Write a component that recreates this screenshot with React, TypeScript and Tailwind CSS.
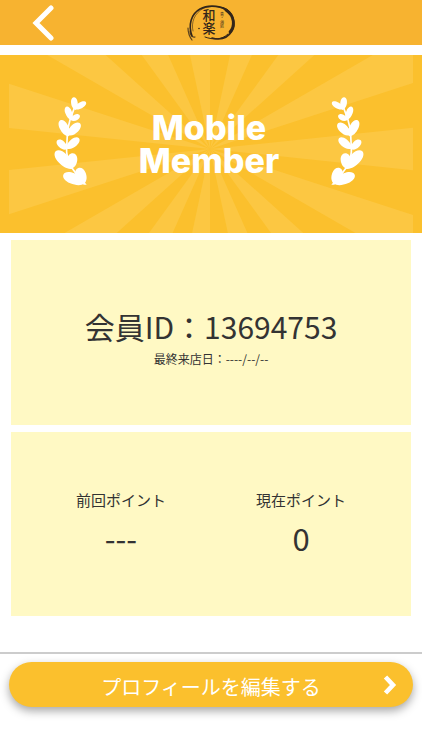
const jp = "font-['Noto_Sans_CJK_JP','Noto_Sans',sans-serif]";

const center = { x: 210, y: 94 };
const rays = Array.from({ length: 15 }, (_, i) => {
  const point = (deg: number) => {
    const a = (deg * Math.PI) / 180;
    return `${(center.x + 400 * Math.cos(a)).toFixed(1)},${(center.y + 400 * Math.sin(a)).toFixed(1)}`;
  };
  return `${center.x},${center.y} ${point(i * 24 - 6)} ${point(i * 24 + 6)}`;
});

// Each leaf: base x, base y, tip x, tip y, half width
const leaves = [
  [106, 60, 101, 22, 10],
  [103, 57, 138, 37, 9],
  [95, 91, 79, 50, 10],
  [92, 90, 119, 76, 9],
  [86, 139, 61, 91, 13],
  [84, 136, 120, 100, 13],
  [81, 178, 52, 151, 11],
  [80, 176, 117, 145, 12],
  [98, 236, 47, 184, 17],
  [94, 236, 99, 190, 15],
  [134, 280, 70, 254, 16],
  [132, 282, 115, 234, 16],
];

function Laurel() {
  return (
    <g fill="#fff">
      <path
        d="M103 54 L90 90 Q83 112 82 135 L80 172 Q77 200 96 234 L112 256"
        fill="none"
        stroke="#fff"
        strokeWidth="5"
      />
      <path d="M122 262 L140 284 L132 284 L118 278Z" />
      {leaves.map(([bx, by, tx, ty, w], i) => {
        const length = Math.hypot(tx - bx, ty - by);
        const angle = (Math.atan2(ty - by, tx - bx) * 180) / Math.PI;
        return (
          <path
            key={i}
            transform={`translate(${bx} ${by}) rotate(${angle})`}
            d={`M0 0 C${length * 0.12} ${-w * 0.8} ${length * 0.35} ${-w} ${length * 0.58} ${-w} C${length * 0.85} ${-w} ${length} ${-w * 0.5} ${length} 0 C${length} ${w * 0.5} ${length * 0.85} ${w} ${length * 0.58} ${w} C${length * 0.35} ${w} ${length * 0.12} ${w * 0.8} 0 0Z`}
          />
        );
      })}
    </g>
  );
}

function Logo() {
  return (
    <svg viewBox="0 0 52 40" className="h-10 w-13" role="img" aria-label="和楽">
      <g fill="none" stroke="#33261a" strokeLinecap="round">
        <path d="M7 33 C3 22 6 11 15 6 C24 1 39 3 44 9" strokeWidth="1.6" />
        <path d="M8 28 C6 20 9 10 19 5 C28 2 37 3 42 9" strokeWidth=".8" opacity=".7" />
        <path d="M38 5 C49 9 51 22 47 28 C42 36 34 37 27 35" strokeWidth="1.6" />
        <path d="M41 7 C50 13 50 23 45 29" strokeWidth="2.8" />
        <path d="M43 31 C37 37 28 37 20 34" strokeWidth="1" />
        <path d="M3 25 C3 30 4 33 7 37 M5 28 C5 31 7 35 10 34" strokeWidth="1.2" opacity=".8" />
      </g>
      <circle cx="14" cy="25.5" r=".8" fill="#33261a" />
      <text
        x="24"
        y="6"
        fontSize="13"
        fill="#33261a"
        className="font-['Noto_Sans_CJK_JP',sans-serif] font-medium [writing-mode:vertical-rl]"
      >
        和楽
      </text>
      <text
        x="37"
        y="9"
        fontSize="4"
        fill="#33261a"
        className="font-['Noto_Sans_CJK_JP',sans-serif] [writing-mode:vertical-rl]"
      >
        青・海処
      </text>
    </svg>
  );
}

function Point({ label, value }: { label: string; value: string }) {
  return (
    <div className="flex flex-col items-center">
      <dt className="text-[15px] leading-6">{label}</dt>
      <dd className="mt-2 text-[31px] leading-9">{value}</dd>
    </div>
  );
}

export default function App() {
  return (
    <div className={`flex min-h-screen flex-col bg-white text-[#333] ${jp}`}>
      <header className="grid h-[45px] grid-cols-[1fr_auto_1fr] items-center bg-[#f7b330]">
        <button type="button" aria-label="戻る" className="ml-8 w-6">
          <svg viewBox="0 0 24 36" className="h-9 w-6" fill="none" stroke="#fff" strokeWidth="5">
            <path d="M19 3 L4 18 L19 33" strokeLinejoin="miter" strokeLinecap="round" />
          </svg>
        </button>
        <Logo />
      </header>

      <main className="flex-1">
        <section className="mt-[10px] grid bg-[#fbc02d]">
          <svg viewBox="0 0 422 178" className="col-start-1 row-start-1 w-full" aria-hidden="true">
            <clipPath id="burst">
              <rect x="9" y="0" width="404" height="178" />
            </clipPath>
            <g clipPath="url(#burst)" fill="#fcc742">
              {rays.map((points) => (
                <polygon key={points} points={points} />
              ))}
            </g>
            <g transform="translate(40 35) scale(.3333)">
              <Laurel />
            </g>
            <g transform="translate(378 35) scale(-.3333 .3333)">
              <Laurel />
            </g>
          </svg>
          <h1 className="col-start-1 row-start-1 self-center pr-1 text-center font-['Inter',sans-serif] text-[34px] leading-[33px] font-extrabold text-white">
            Mobile
            <br />
            Member
          </h1>
        </section>

        <div className="mx-[11px] mt-[7px] flex flex-col gap-[7px]">
          <section className="bg-[#fff9c4] px-4 pt-[63px] pb-[57px] text-center">
            <h2 className="text-[30px] leading-[46px]">会員ID：13694753</h2>
            <p className="text-xs leading-[19px]">最終来店日：----/--/--</p>
          </section>
          <dl className="grid grid-cols-2 bg-[#fff9c4] px-5 pt-14 pb-15">
            <Point label="前回ポイント" value="---" />
            <Point label="現在ポイント" value="0" />
          </dl>
        </div>
      </main>

      <footer className="border-t-2 border-[#ccc] px-[9px] pt-2 pb-[43px]">
        <button
          type="button"
          className="grid h-[45px] w-full grid-cols-[1fr_auto_1fr] items-center rounded-full bg-[#fbc02d] text-xl text-white shadow-[0_4px_10px_rgba(0,0,0,0.35)]"
        >
          <span className="col-start-2 pt-1">プロフィールを編集する</span>
          <svg
            viewBox="0 0 14 20"
            className="mr-4 h-5 w-3.5 justify-self-end"
            fill="none"
            stroke="#fff"
            strokeWidth="4.6"
            aria-hidden="true"
          >
            <path d="M2.5 2 L10 10 L2.5 18" />
          </svg>
        </button>
      </footer>
    </div>
  );
}
